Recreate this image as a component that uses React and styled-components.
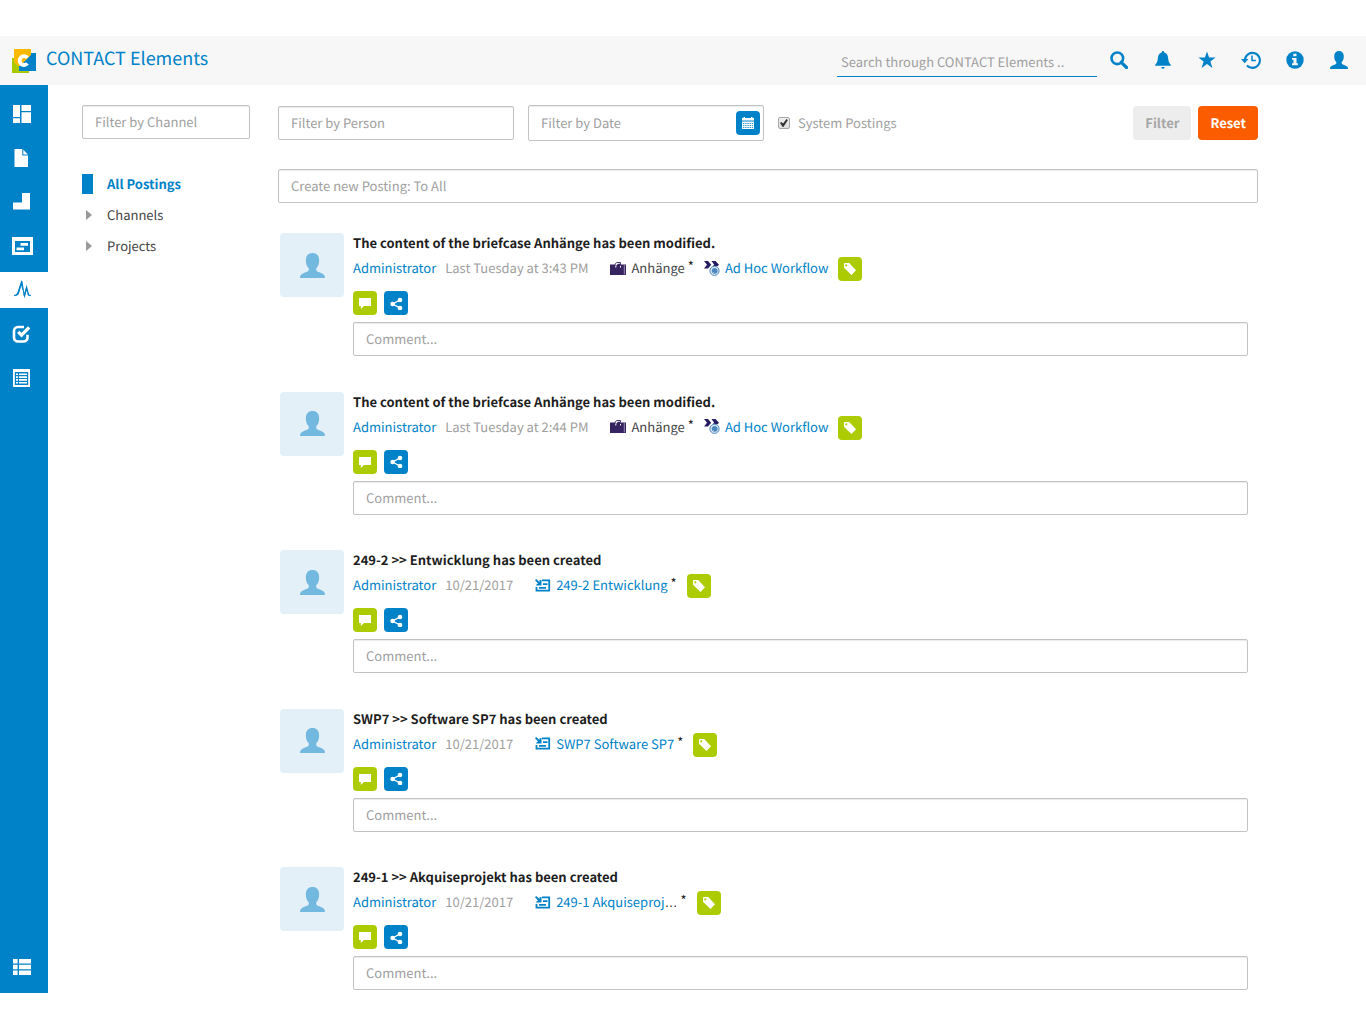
import React from "react";
import styled, { createGlobalStyle, css } from "styled-components";

const blue = "#0082c8";
const green = "#accb00";
const orange = "#fb5c00";
const muted = "#a0a0a0";
const dark = "#1e1e1e";

const Global = createGlobalStyle`
  *, *::before, *::after { box-sizing: border-box; }
  body { margin: 0; background: #fff; }
  body, input, button {
    font-family: "Noto Sans CJK SC", "Open Sans", sans-serif;
    font-size: 13px;
    line-height: 20px;
    color: ${dark};
    text-rendering: geometricPrecision;
  }
  a { color: ${blue}; text-decoration: none; }
`;

const Page = styled.div`
  display: flex;
  flex-direction: column;
  min-height: 100vh;
  padding: 36px 0 35px;
`;

const Header = styled.header`
  display: flex;
  align-items: center;
  height: 49px;
  padding: 0 5px 0 12px;
  background: #f7f7f7;
`;

const Brand = styled.a`
  display: flex;
  align-items: center;
  gap: 10px;
  margin-right: auto;
`;

const BrandName = styled.span`
  font-size: 18px;
  line-height: 24px;
  padding-bottom: 6px;
`;

const SearchInput = styled.input`
  align-self: flex-end;
  width: 260px;
  height: 29px;
  margin-bottom: 8px;
  padding: 0 4px 2px;
  border: 0;
  border-bottom: 1px solid ${blue};
  background: transparent;
  outline: none;
  &::placeholder { color: ${muted}; opacity: 1; }
`;

const HeaderButton = styled.button`
  display: flex;
  align-items: center;
  justify-content: center;
  width: 44px;
  height: 44px;
  padding: 0 0 2px;
  border: 0;
  background: none;
  color: ${blue};
`;

const Body = styled.div`
  display: flex;
  flex: 1;
`;

const Sidebar = styled.nav`
  display: flex;
  flex-direction: column;
  gap: 8px;
  width: 48px;
  padding: 11px 0 8px;
  background: ${blue};
`;

const SidebarLink = styled.a`
  display: flex;
  align-items: center;
  height: 36px;
  padding-left: 12px;
  color: ${(p) => (p.$active ? blue : "#fff")};
  background: ${(p) => (p.$active ? "#fff" : "transparent")};
  margin-top: ${(p) => (p.$last ? "auto" : "0")};
`;

const Main = styled.main`
  display: flex;
  flex: 1;
  gap: 28px;
  padding: 20px 108px 3px 34px;
`;

const field = css`
  height: 34px;
  padding: 0 12px;
  border: 1px solid #c3c3c3;
  border-radius: 2px;
  background: #fff;
  box-shadow: inset 0 1px 1px rgba(0, 0, 0, 0.08);
`;

const TextField = styled.input`
  ${field}
  width: ${(p) => p.$width || "100%"};
  padding-bottom: 1px;
  outline: none;
  &::placeholder { color: ${muted}; opacity: 1; }
`;

const Channels = styled.aside`
  width: 168px;
`;

const ChannelList = styled.ul`
  list-style: none;
  margin: 29px 0 0;
  padding: 0;
`;

const ChannelItem = styled.li`
  display: flex;
  align-items: center;
  height: 31px;
  gap: 14px;
`;

const Marker = styled.span`
  display: flex;
  align-items: center;
  padding-left: ${(p) => (p.$active ? "0" : "4px")};
  width: 11px;
  height: 20px;
  background: ${(p) => (p.$active ? blue : "transparent")};
`;

const ChannelLink = styled.a`
  color: ${(p) => (p.$active ? blue : "#444")};
  font-weight: ${(p) => (p.$active ? 700 : 400)};
`;

const Stream = styled.section`
  display: flex;
  flex-direction: column;
  flex: 1;
  min-width: 0;
`;

const FilterBar = styled.form`
  display: flex;
  align-items: center;
  gap: 14px;
  margin-bottom: 28px;
`;

const DateField = styled.div`
  ${field}
  display: flex;
  align-items: center;
  width: 236px;
  height: 36px;
  padding: 0 3px 0 12px;
`;

const DateInput = styled.input`
  flex: 1;
  min-width: 0;
  padding: 0;
  border: 0;
  background: none;
  outline: none;
  &::placeholder { color: ${muted}; opacity: 1; }
`;

const IconButton = styled.button`
  display: flex;
  flex: none;
  align-items: center;
  justify-content: center;
  width: 24px;
  height: 24px;
  padding: 0;
  border: 0;
  border-radius: 4px;
  color: #fff;
  background: ${(p) => (p.$green ? green : blue)};
`;

const CheckLabel = styled.label`
  display: flex;
  align-items: center;
  gap: 8px;
  color: ${muted};
`;

const CheckBox = styled.input`
  appearance: none;
  display: grid;
  place-items: center;
  width: 12px;
  height: 12px;
  margin: 0;
  border: 1px solid #a8a8a8;
  border-radius: 2px;
  background: linear-gradient(#eee, #ddd);
  &:checked::after {
    content: "";
    width: 8px;
    height: 8px;
    background: #333;
    clip-path: polygon(0 50%, 16% 36%, 38% 56%, 82% 0, 100% 12%, 42% 100%, 34% 100%);
  }
`;

const Actions = styled.div`
  display: flex;
  gap: 7px;
  margin-left: auto;
`;

const ActionButton = styled.button`
  height: 34px;
  padding: 0 12px;
  border: 0;
  border-radius: 4px;
  font-weight: 700;
  color: ${(p) => (p.$primary ? "#fff" : "#a6a6a6")};
  background: ${(p) => (p.$primary ? orange : "#ededed")};
`;

const Feed = styled.div`
  display: flex;
  flex: 1;
  flex-direction: column;
  justify-content: space-between;
  gap: 24px;
  margin-top: 30px;
  padding: 0 10px 0 2px;
`;

const Post = styled.article`
  display: flex;
  gap: 9px;
`;

const Avatar = styled.div`
  display: flex;
  flex: none;
  align-items: center;
  justify-content: center;
  width: 64px;
  height: 64px;
  border-radius: 4px;
  color: #73b8df;
  background: #e3f0f8;
`;

const PostBody = styled.div`
  flex: 1;
  min-width: 0;
`;

const Title = styled.h2`
  margin: 0;
  font-size: 13px;
  line-height: 20px;
  font-weight: 700;
`;

const Meta = styled.div`
  display: flex;
  align-items: center;
  height: 24px;
  margin-top: 3px;
`;

const When = styled.time`
  margin: 0 22px 0 9px;
  color: ${muted};
`;

const Objects = styled.div`
  display: flex;
  gap: 10px;
  align-items: center;
`;

const ObjectRef = styled.span`
  display: flex;
  align-items: center;
  gap: 5px;
`;

const ObjectLink = styled.a`
  color: ${(p) => (p.$plain ? "#444" : blue)};
`;

const Ellipsis = styled.span`
  font-family: "Liberation Sans", sans-serif;
  color: ${dark};
`;

const Star = styled.span`
  margin-left: -2px;
  padding-bottom: 4px;
`;

const TagButton = styled(IconButton)`
  margin-top: 2px;
`;

const Buttons = styled.div`
  display: flex;
  gap: 7px;
  margin: 11px 0 7px;
`;

/* Icons */

const Svg = ({ w = 18, h = w, children }) => (
  <svg width={w} height={h} viewBox={`0 0 ${w} ${h}`} fill="currentColor" aria-hidden="true">
    {children}
  </svg>
);

const Logo = () => (
  <Svg w={24}>
    <path d="M0 9h17v15H0z" fill="#a9c900" />
    <path d="M7 4h17v18H7z" fill={blue} />
    <path d="M2 0h17v6L8 17H6L2 13z" fill="#fdb900" />
    <path d="M15.400 8.800A4.400 4.400 0 1 0 15.400 14.400" fill="none" stroke="#fff" strokeWidth="3.800" />
  </Svg>
);

const SearchIcon = () => (
  <Svg>
    <circle cx="7.300" cy="7.300" r="5.800" fill="none" stroke="currentColor" strokeWidth="2.600" />
    <path d="M11.300 11.300l5.200 5.200" stroke="currentColor" strokeWidth="3.200" strokeLinecap="round" />
  </Svg>
);

const BellIcon = () => (
  <Svg>
    <path d="M9 0c.9 0 1.300.6 1.300 1.500 2.600.6 3.600 2.700 3.800 5.500.2 3 .8 4.800 2.700 6.800v1H1.200v-1C3.100 11.800 3.700 10 3.900 7c.2-2.800 1.200-4.900 3.800-5.500C7.700.6 8.100 0 9 0zM7.300 16h3.400c-.2 1.100-.8 1.800-1.700 1.800S7.500 17.100 7.300 16z" />
  </Svg>
);

const FavoriteIcon = () => (
  <Svg>
    <path d="M9 .6l2.100 6h6.500l-5.200 3.900 2 6.400L9 13l-5.400 3.900 2-6.400L.4 6.600h6.500z" />
  </Svg>
);

const HistoryIcon = () => (
  <Svg w={20} h={18}>
    <path d="M3.900 8.600A7.500 7.500 0 1 1 5.900 14.500" fill="none" stroke="currentColor" strokeWidth="2.100" />
    <path d="M0 8h7.400l-3.700 4.300z" />
    <path d="M11 4.500v5h3.800" fill="none" stroke="currentColor" strokeWidth="1.500" />
  </Svg>
);

const InfoIcon = () => (
  <Svg>
    <circle cx="9" cy="9" r="8.700" />
    <path d="M7.300 2.700h3.200v2.600H7.300zM6 6.900h4.500v5.400h1.300v1.900H6v-1.900h1.500V8.800H6z" fill="#f7f7f7" />
  </Svg>
);

const UserIcon = ({ size = 18 }) => (
  <svg width={size} height={size} viewBox="0 0 18 18" fill="currentColor" aria-hidden="true">
    <path d="M9 0c3 0 4.800 1.900 4.800 5.400 0 2.700-.9 4.500-2.100 5.500v1.300c0 .8.900 1.200 3.100 2.100 2.100.9 3.200 1.500 3.200 3.700H0c0-2.200 1.100-2.800 3.200-3.700 2.200-.9 3.100-1.300 3.100-2.100v-1.300C5.100 9.900 4.200 8.100 4.200 5.400 4.200 1.900 6 0 9 0z" />
  </svg>
);

const DashboardIcon = () => (
  <Svg w={20} h={18}>
    <path d="M1 0h7v12H1zM1 13.300h7V18H1zM9.500 0H19v6H9.500zM9.500 7.300H19V18H9.500z" />
  </Svg>
);

const FileIcon = () => (
  <Svg w={20} h={18}>
    <path d="M2.500 0h7.800v6.500H16V18H2.500z" />
    <path d="M11.300.8L16 5.500h-4.700z" />
  </Svg>
);

const ShapeIcon = () => (
  <Svg w={20} h={18}>
    <path d="M10 0h8v16.500H1v-7h9z" />
  </Svg>
);

const BoardIcon = () => (
  <Svg w={21} h={18}>
    <path fillRule="evenodd" d="M0 0h21v18H0zM3 4v11h15V4z" />
    <path d="M8.500 6H16v2.800H8.500zM4.500 10.400H12v2.800H4.500z" />
  </Svg>
);

const ActivityIcon = () => (
  <Svg w={20} h={20}>
    <path d="M2 15.800c2.500-.3 3.500-1.200 4.100-3.600L9.800 1l2.500 15 2.300-9 1.800 6.800c.4 1.300 1 1.900 2.600 2" fill="none" stroke="currentColor" strokeWidth="1.100" />
    <path d="M5.800 12.500L9.800 0l1.200 9.500-.8.500-.8-4.500-2.300 7.700c-.6 1.800-2 2.800-4.500 2.800 1.700-.7 2.700-1.900 3.200-3.500zM11.300 11l1 3 2.300-8.500.6 6.500-.9-.7-1.700 7.200-1-4zM15.200 9.500l1.300 4c.4 1.200 1.200 1.900 2.700 2.300-2.100.5-3.200 0-3.700-1.300z" />
  </Svg>
);

const TaskIcon = () => (
  <Svg w={20} h={18}>
    <path d="M15.500 9.800v2.700a4 4 0 0 1-4 4H6a4 4 0 0 1-4-4V6a4 4 0 0 1 4-4h6" fill="none" stroke="currentColor" strokeWidth="2.600" />
    <path d="M6.200 6.900l3.300 3.300 7.600-7.900" fill="none" stroke="currentColor" strokeWidth="3.200" />
  </Svg>
);

const ListIcon = () => (
  <Svg w={20} h={18}>
    <path fillRule="evenodd" d="M1 0h17v18H1zM2.800 3v13h13.400V3z" />
    <path d="M4 4.500h2v1.600H4zM7 4.500h8v1.600H7zM4 7.300h2v1.600H4zM7 7.300h8v1.600H7zM4 10.100h2v1.600H4zM7 10.100h8v1.600H7zM4 12.900h2v1.600H4zM7 12.900h8v1.600H7z" />
  </Svg>
);

const RowsIcon = () => (
  <Svg w={20} h={18}>
    <path d="M1 1h4.600v4.500H1zM7 1h12v4.500H7zM1 6.800h4.600v4.400H1zM7 6.800h12v4.400H7zM1 12.600h4.600V17H1zM7 12.600h12V17H7z" />
  </Svg>
);

const ArrowIcon = () => (
  <Svg w={6} h={10}>
    <path d="M0 0l6 5-6 5z" fill="#999" />
  </Svg>
);

const CalendarIcon = () => (
  <Svg w={12}>
    <path d="M0 1h1.500V0h1.500v1h6V0h1.500v1H12v2.500H0zM0 4.500h12V12H0z" />
    <path d="M1 6.500h10M1 8.500h10M1 10.500h10" stroke={blue} strokeWidth="0.800" strokeDasharray="1.400 0.800" />
  </Svg>
);

const TagIcon = () => (
  <Svg w={12}>
    <path fillRule="evenodd" d="M0 .8Q0 0 .8 0h4.400L12 7.300 7.500 12 0 4.800zM2.300 1.200a1.100 1.100 0 1 0 0 2.200 1.100 1.100 0 0 0 0-2.200z" />
  </Svg>
);

const CommentIcon = () => (
  <Svg w={14} h={12}>
    <path d="M1 1h12v8H6l-3.200 3V9H1z" />
  </Svg>
);

const ShareIcon = () => (
  <Svg w={13} h={13}>
    <circle cx="2.600" cy="7" r="2.300" />
    <circle cx="10" cy="3" r="2.300" />
    <circle cx="10" cy="11" r="2.300" />
    <path d="M10 3L2.600 7 10 11" fill="none" stroke="currentColor" strokeWidth="1.400" />
  </Svg>
);

const CaseIcon = () => (
  <Svg w={16} h={13}>
    <path d="M0 2.500h5.300v3h1v-2L8 1.800h2v3.700h1v-3h5V13H0z" fill="#352460" />
    <path d="M5 4V2.200L6.800.5h3.700V4" fill="none" stroke="#352460" strokeWidth="0.900" />
    <path d="M14.300 3v9.500" stroke="#fff" strokeWidth="0.500" />
  </Svg>
);

const WorkflowIcon = () => (
  <Svg w={16} h={15}>
    <path d="M0 0h4l3.200 3.700L4 7.400H0l3-3.700zM7.500 0h4L15 3.700l-1.600 1.500H8.600l1.600-1.500z" fill="#261c62" />
    <circle cx="10.500" cy="9.800" r="4.600" fill="#d9e6f2" stroke="#4b87bf" strokeWidth="1" />
    <circle cx="10.700" cy="9.800" r="2.900" fill="#4b87bf" />
    <path d="M8.500 12.500l1-1M12.500 8l1-1" stroke="#fff" strokeWidth="0.700" />
  </Svg>
);

const ProjectIcon = () => (
  <Svg w={16} h={13}>
    <path d="M7 1.400h7.200v10.200H1.500V8" fill="none" stroke={blue} strokeWidth="1.800" />
    <path d="M0 1.200L1.200 0l3.300 3V1.200L6.500 1v5.500H1L2 4.800h1.300zM8 4.200h4.500v1.700H8zM4 8h7v1.700H4z" fill={blue} />
  </Svg>
);

/* Data */

const headerActions = [
  ["Search", SearchIcon],
  ["Notifications", BellIcon],
  ["Favorites", FavoriteIcon],
  ["History", HistoryIcon],
  ["Information", InfoIcon],
  ["User", UserIcon],
];

const navItems = [
  ["Dashboard", DashboardIcon],
  ["Documents", FileIcon],
  ["Products", ShapeIcon],
  ["Project board", BoardIcon],
  ["Activities", ActivityIcon],
  ["Tasks", TaskIcon],
  ["Lists", ListIcon],
  ["Menu", RowsIcon],
];

const workflowRefs = [
  { icon: CaseIcon, text: "Anhänge", plain: true, star: true },
  { icon: WorkflowIcon, text: "Ad Hoc Workflow" },
];

const project = (text, more) => [{ icon: ProjectIcon, text, more, star: true }];

const posts = [
  { title: "The content of the briefcase Anhänge has been modified.", when: "Last Tuesday at 3:43 PM", refs: workflowRefs },
  { title: "The content of the briefcase Anhänge has been modified.", when: "Last Tuesday at 2:44 PM", refs: workflowRefs },
  { title: "249-2 >> Entwicklung has been created", when: "10/21/2017", refs: project("249-2 Entwicklung") },
  { title: "SWP7 >> Software SP7 has been created", when: "10/21/2017", refs: project("SWP7 Software SP7") },
  { title: "249-1 >> Akquiseprojekt has been created", when: "10/21/2017", refs: project("249-1 Akquiseproj", true) },
];

const Posting = ({ post }) => (
  <Post>
    <Avatar><UserIcon size={25} /></Avatar>
    <PostBody>
      <Title>{post.title}</Title>
      <Meta>
        <a href="#administrator">Administrator</a>
        <When>{post.when}</When>
        <Objects>
          {post.refs.map((r) => (
            <ObjectRef key={r.text}>
              <r.icon />
              <ObjectLink href="#object" $plain={r.plain}>
                {r.text}
                {r.more && <Ellipsis>…</Ellipsis>}
              </ObjectLink>
              {r.star && <Star>*</Star>}
            </ObjectRef>
          ))}
          <TagButton $green aria-label="Tags"><TagIcon /></TagButton>
        </Objects>
      </Meta>
      <Buttons>
        <IconButton $green aria-label="Comment"><CommentIcon /></IconButton>
        <IconButton aria-label="Share"><ShareIcon /></IconButton>
      </Buttons>
      <TextField placeholder="Comment..." aria-label="Comment text" />
    </PostBody>
  </Post>
);

export default function App() {
  return (
    <Page>
      <Global />
      <Header>
        <Brand href="#home">
          <Logo />
          <BrandName>CONTACT Elements</BrandName>
        </Brand>
        <SearchInput placeholder="Search through CONTACT Elements .." aria-label="Search" />
        {headerActions.map(([label, Icon]) => (
          <HeaderButton key={label} aria-label={label}><Icon /></HeaderButton>
        ))}
      </Header>
      <Body>
        <Sidebar>
          {navItems.map(([label, Icon]) => (
            <SidebarLink key={label} href="#nav" aria-label={label} $active={label === "Activities"} $last={label === "Menu"}>
              <Icon />
            </SidebarLink>
          ))}
        </Sidebar>
        <Main>
          <Channels>
            <TextField placeholder="Filter by Channel" aria-label="Filter by Channel" />
            <ChannelList>
              {["All Postings", "Channels", "Projects"].map((name, i) => (
                <ChannelItem key={name}>
                  <Marker $active={i === 0}>{i > 0 && <ArrowIcon />}</Marker>
                  <ChannelLink href="#channel" $active={i === 0}>{name}</ChannelLink>
                </ChannelItem>
              ))}
            </ChannelList>
          </Channels>
          <Stream>
            <FilterBar>
              <TextField $width="236px" placeholder="Filter by Person" aria-label="Filter by Person" />
              <DateField>
                <DateInput placeholder="Filter by Date" aria-label="Filter by Date" />
                <IconButton type="button" aria-label="Open calendar"><CalendarIcon /></IconButton>
              </DateField>
              <CheckLabel>
                <CheckBox type="checkbox" defaultChecked />
                System Postings
              </CheckLabel>
              <Actions>
                <ActionButton type="button" disabled>Filter</ActionButton>
                <ActionButton type="button" $primary>Reset</ActionButton>
              </Actions>
            </FilterBar>
            <TextField placeholder="Create new Posting: To All" aria-label="Create new Posting" />
            <Feed>
              {posts.map((post, i) => <Posting key={i} post={post} />)}
            </Feed>
          </Stream>
        </Main>
      </Body>
    </Page>
  );
}
